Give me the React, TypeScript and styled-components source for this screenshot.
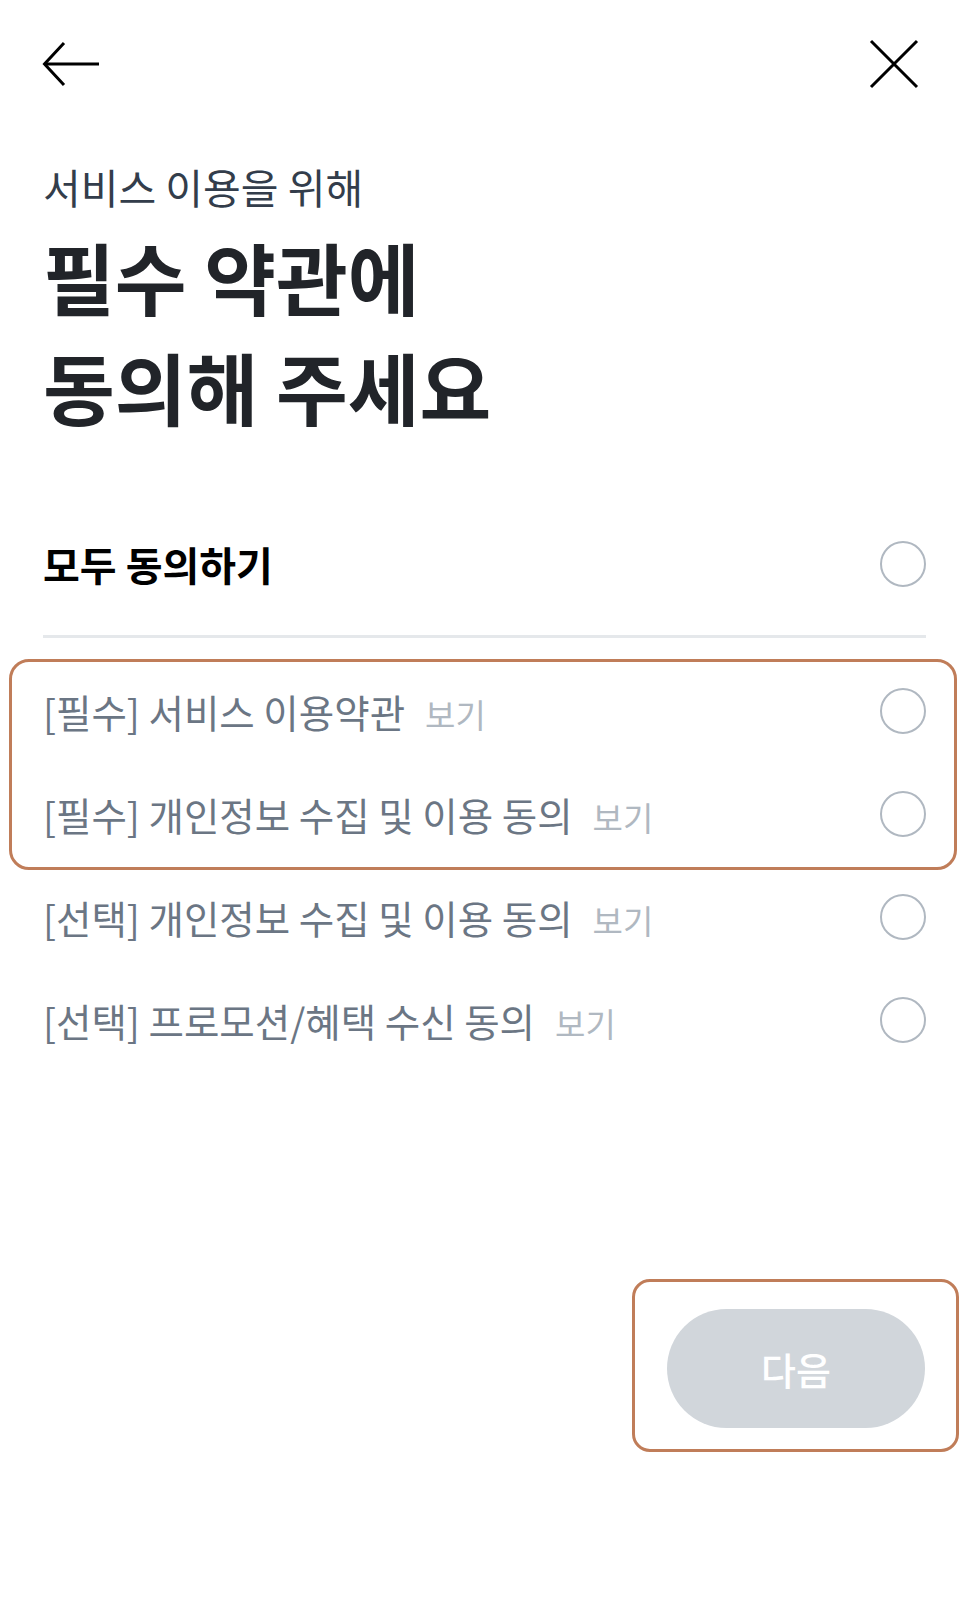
import React from "react";
import styled, { createGlobalStyle } from "styled-components";

const Global = createGlobalStyle`
  html, body { margin: 0; padding: 0; background: #ffffff; }
  body { font-family: "Noto Sans CJK KR", "Noto Sans", sans-serif; -webkit-font-smoothing: antialiased; }
  * { box-sizing: border-box; }
`;

const Page = styled.div`
  width: 966px;
  min-height: 1615px;
  background: #fff;
  display: flex;
  flex-direction: column;
`;

const Header = styled.header`
  height: 128px;
  display: flex;
  align-items: center;
  justify-content: space-between;
  padding: 0 47px 0 42px;
`;

const IconButton = styled.button`
  border: 0;
  background: none;
  padding: 0;
  display: flex;
  align-items: center;
  justify-content: center;
  color: #000;
`;

const Content = styled.main`
  padding: 0 40px 0 43px;
  display: flex;
  flex-direction: column;
`;

const Subtitle = styled.p`
  margin: 36px 0 0;
  font-size: 41px;
  line-height: 44px;
  color: #333d4b;
  font-weight: 400;
`;

const Title = styled.h1`
  margin: 13px 0 0;
  font-size: 78px;
  line-height: 110px;
  font-weight: 700;
  color: #212429;
`;

const AllRow = styled.div`
  margin-top: 78px;
  height: 90px;
  display: flex;
  align-items: center;
  justify-content: space-between;
`;

const AllLabel = styled.span`
  font-size: 40px;
  font-weight: 700;
  color: #000;
`;

const Divider = styled.hr`
  margin: 26px 0 0;
  border: 0;
  height: 3px;
  background: #e5e8eb;
`;

const List = styled.ul`
  list-style: none;
  margin: 21px 0 0;
  padding: 0;
`;

const Highlight = styled.div`
  position: relative;
  &::after {
    content: "";
    position: absolute;
    left: -34px;
    right: -31px;
    top: 0;
    bottom: -5px;
    border: 3px solid #c07d59;
    border-radius: 20px;
    pointer-events: none;
  }
`;

const Row = styled.li`
  height: 103px;
  display: flex;
  align-items: center;
  justify-content: space-between;
`;

const RowText = styled.span`
  display: flex;
  align-items: baseline;
  gap: 20px;
`;

const Label = styled.span`
  font-size: 38.5px;
  color: #6b7684;
`;

const View = styled.span`
  font-size: 33px;
  color: #b0b8c1;
`;

const Circle = styled.span`
  width: 46px;
  height: 46px;
  border-radius: 50%;
  border: 2.5px solid #b0b8c1;
  flex: none;
`;

const Footer = styled.div`
  margin-top: 238px;
  display: flex;
  justify-content: flex-end;
  padding-right: 41px;
`;

const ButtonWrap = styled.div`
  position: relative;
  &::after {
    content: "";
    position: absolute;
    left: -35px;
    right: -34px;
    top: -30px;
    bottom: -24px;
    border: 3px solid #c07d59;
    border-radius: 18px;
    pointer-events: none;
  }
`;

const NextButton = styled.button`
  width: 258px;
  height: 119px;
  border: 0;
  border-radius: 60px;
  background: #d1d6db;
  color: #ffffff;
  font-family: inherit;
  font-size: 38px;
  font-weight: 500;
`;

const BackIcon = () => (
  <svg width="58" height="46" viewBox="0 0 58 46" fill="none">
    <path d="M3 23 H57" stroke="#000" strokeWidth="3.2" />
    <path d="M22 2 L2.5 23 L22 44" stroke="#000" strokeWidth="3" strokeLinejoin="miter" />
  </svg>
);

const CloseIcon = () => (
  <svg width="50" height="50" viewBox="0 0 50 50" fill="none">
    <path d="M2 2 L48 48 M48 2 L2 48" stroke="#000" strokeWidth="3" />
  </svg>
);

const items = [
  { label: "[필수] 서비스 이용약관" },
  { label: "[필수] 개인정보 수집 및 이용 동의" },
  { label: "[선택] 개인정보 수집 및 이용 동의" },
  { label: "[선택] 프로모션/혜택 수신 동의" },
];

const ItemRow = ({ label }: { label: string }) => (
  <Row>
    <RowText>
      <Label>{label}</Label>
      <View>보기</View>
    </RowText>
    <Circle />
  </Row>
);

export default function App() {
  return (
    <Page>
      <Global />
      <Header>
        <IconButton aria-label="뒤로">
          <BackIcon />
        </IconButton>
        <IconButton aria-label="닫기">
          <CloseIcon />
        </IconButton>
      </Header>
      <Content>
        <Subtitle>서비스 이용을 위해</Subtitle>
        <Title>
          필수 약관에
          <br />
          동의해 주세요
        </Title>
        <AllRow>
          <AllLabel>모두 동의하기</AllLabel>
          <Circle />
        </AllRow>
        <Divider />
        <List>
          <Highlight>
            <ItemRow label={items[0].label} />
            <ItemRow label={items[1].label} />
          </Highlight>
          <ItemRow label={items[2].label} />
          <ItemRow label={items[3].label} />
        </List>
      </Content>
      <Footer>
        <ButtonWrap>
          <NextButton>다음</NextButton>
        </ButtonWrap>
      </Footer>
    </Page>
  );
}
